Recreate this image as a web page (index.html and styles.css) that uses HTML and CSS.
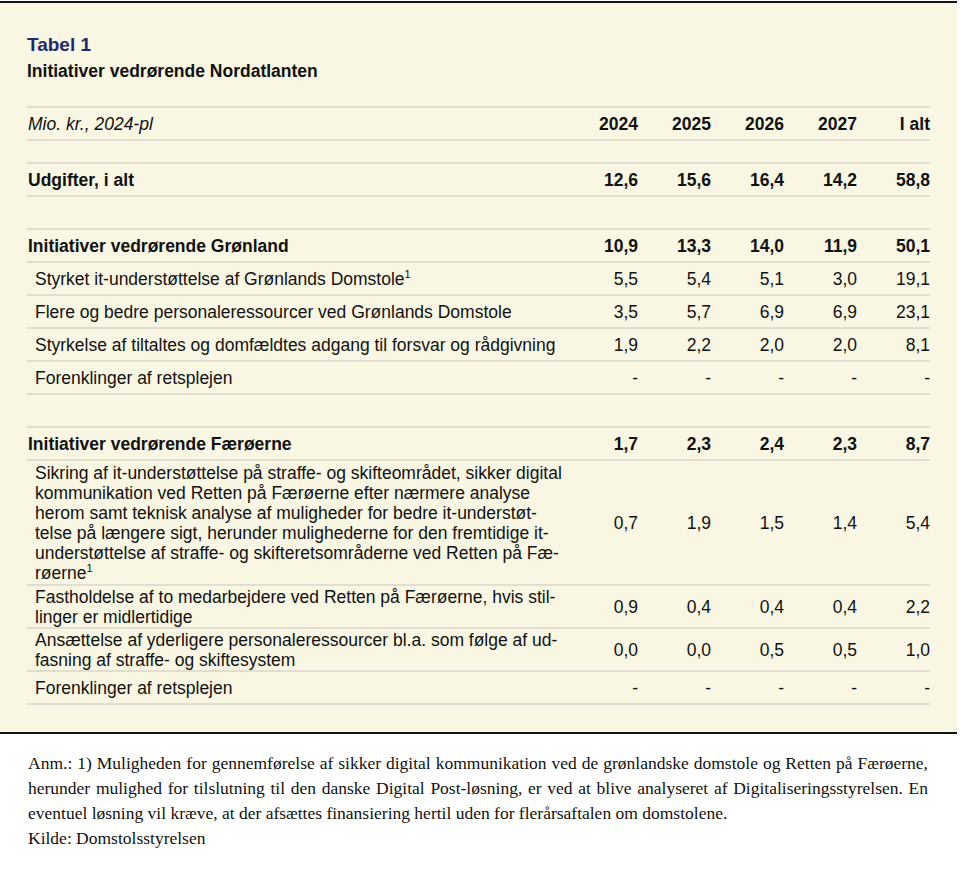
FILE: index.html
```html
<!DOCTYPE html>
<html lang="da">
<head>
<meta charset="utf-8">
<title>Tabel 1</title>
<link rel="stylesheet" href="styles.css">
</head>
<body>
<section class="panel">
  <h1 class="title">Tabel 1</h1>
  <h2 class="subtitle">Initiativer vedrørende Nordatlanten</h2>

  <div class="group first">
    <div class="row head">
      <div class="label"><em>Mio. kr., 2024-pl</em></div>
      <div class="num">2024</div><div class="num">2025</div><div class="num">2026</div><div class="num">2027</div><div class="num">I alt</div>
    </div>
  </div>

  <div class="group gap-s">
    <div class="row bold">
      <div class="label">Udgifter, i alt</div>
      <div class="num">12,6</div><div class="num">15,6</div><div class="num">16,4</div><div class="num">14,2</div><div class="num">58,8</div>
    </div>
  </div>

  <div class="group gap-l">
    <div class="row bold">
      <div class="label">Initiativer vedrørende Grønland</div>
      <div class="num">10,9</div><div class="num">13,3</div><div class="num">14,0</div><div class="num">11,9</div><div class="num">50,1</div>
    </div>
    <div class="row sub">
      <div class="label">Styrket it-understøttelse af Grønlands Domstole<sup>1</sup></div>
      <div class="num">5,5</div><div class="num">5,4</div><div class="num">5,1</div><div class="num">3,0</div><div class="num">19,1</div>
    </div>
    <div class="row sub">
      <div class="label">Flere og bedre personaleressourcer ved Grønlands Domstole</div>
      <div class="num">3,5</div><div class="num">5,7</div><div class="num">6,9</div><div class="num">6,9</div><div class="num">23,1</div>
    </div>
    <div class="row sub">
      <div class="label">Styrkelse af tiltaltes og domfældtes adgang til forsvar og rådgivning</div>
      <div class="num">1,9</div><div class="num">2,2</div><div class="num">2,0</div><div class="num">2,0</div><div class="num">8,1</div>
    </div>
    <div class="row sub">
      <div class="label">Forenklinger af retsplejen</div>
      <div class="num">-</div><div class="num">-</div><div class="num">-</div><div class="num">-</div><div class="num">-</div>
    </div>
  </div>

  <div class="group gap-l">
    <div class="row bold">
      <div class="label">Initiativer vedrørende Færøerne</div>
      <div class="num">1,7</div><div class="num">2,3</div><div class="num">2,4</div><div class="num">2,3</div><div class="num">8,7</div>
    </div>
    <div class="row sub multi tall">
      <div class="label">Sikring af it-understøttelse på straffe- og skifteområdet, sikker digital<br>kommunikation ved Retten på Færøerne efter nærmere analyse<br>herom samt teknisk analyse af muligheder for bedre it-understøt-<br>telse på længere sigt, herunder mulighederne for den fremtidige it-<br>understøttelse af straffe- og skifteretsområderne ved Retten på Fæ-<br>røerne<sup>1</sup></div>
      <div class="num">0,7</div><div class="num">1,9</div><div class="num">1,5</div><div class="num">1,4</div><div class="num">5,4</div>
    </div>
    <div class="row sub multi">
      <div class="label">Fastholdelse af to medarbejdere ved Retten på Færøerne, hvis stil-<br>linger er midlertidige</div>
      <div class="num">0,9</div><div class="num">0,4</div><div class="num">0,4</div><div class="num">0,4</div><div class="num">2,2</div>
    </div>
    <div class="row sub multi">
      <div class="label">Ansættelse af yderligere personaleressourcer bl.a. som følge af ud-<br>fasning af straffe- og skiftesystem</div>
      <div class="num">0,0</div><div class="num">0,0</div><div class="num">0,5</div><div class="num">0,5</div><div class="num">1,0</div>
    </div>
    <div class="row sub">
      <div class="label">Forenklinger af retsplejen</div>
      <div class="num">-</div><div class="num">-</div><div class="num">-</div><div class="num">-</div><div class="num">-</div>
    </div>
  </div>
</section>

<footer class="notes">
  <p class="note">
    <span class="jline">Anm.: 1) Muligheden for gennemførelse af sikker digital kommunikation ved de grønlandske domstole og Retten på Færøerne,</span>
    <span class="jline">herunder mulighed for tilslutning til den danske Digital Post-løsning, er ved at blive analyseret af Digitaliseringsstyrelsen. En</span>
    <span class="line">eventuel løsning vil kræve, at der afsættes finansiering hertil uden for flerårsaftalen om domstolene.</span>
  </p>
  <p class="note">Kilde: Domstolsstyrelsen</p>
</footer>
</body>
</html>
```

FILE: styles.css
```css
html, body {
  margin: 0;
  padding: 0;
  background: #ffffff;
}

body {
  font-family: "Liberation Sans", Arial, sans-serif;
  color: #111111;
}

.panel {
  width: 957px;
  box-sizing: border-box;
  margin-top: 1px;
  background: #f9f7e3;
  border-top: 2px solid #151515;
  border-bottom: 2px solid #151515;
  padding: 30px 27px 27px 27px;
}

.title {
  margin: 0;
  font-size: 19px;
  line-height: 24px;
  font-weight: bold;
  color: #1f2a6c;
}

.subtitle {
  margin: 2px 0 0 0;
  font-size: 17.5px;
  line-height: 24px;
  font-weight: bold;
  color: #111111;
}

.group {
  width: 903px;
  border-top: 2px solid #e1ded1;
}

.group.first { margin-top: 23px; }
.group.gap-s { margin-top: 21px; }
.group.gap-l { margin-top: 31px; }

.row {
  display: grid;
  grid-template-columns: 1fr repeat(5, 73px);
  align-items: center;
  border-bottom: 2px solid #e1ded1;
  font-size: 17.5px;
  line-height: 20px;
  padding: 6px 0 5px 0;
}

.row.multi {
  padding: 1px 0 0 0;
}

.row.multi.tall {
  padding: 2px 0 1px 0;
}

.label {
  padding-left: 1px;
  white-space: nowrap;
}

.row.sub .label {
  padding-left: 8px;
}

.row.head .label em {
  font-style: italic;
}

.row.head .num,
.row.bold {
  font-weight: bold;
}

.num {
  text-align: right;
}

sup {
  font-size: 11px;
  line-height: 0;
  vertical-align: 7px;
}

.notes {
  padding: 17px 30px 0 28px;
  font-family: "Liberation Serif", "Times New Roman", serif;
  font-size: 17.5px;
  line-height: 25px;
  color: #111111;
}

.note {
  margin: 0;
  width: 900px;
}

.jline {
  display: block;
  text-align: justify;
  text-align-last: justify;
}

.line {
  display: block;
}
```
